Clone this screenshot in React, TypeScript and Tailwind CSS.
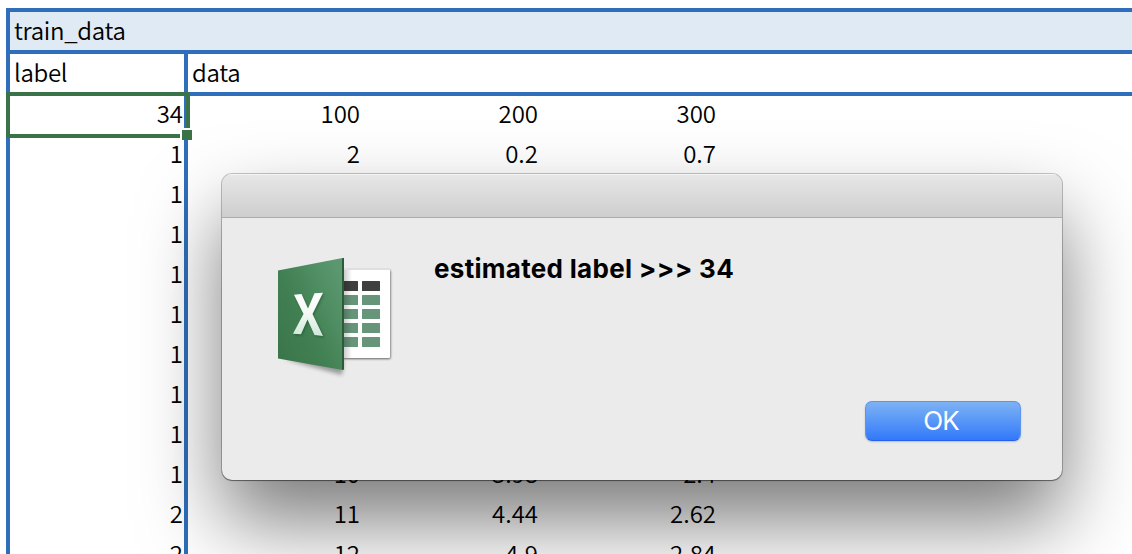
const rows: string[][] = [
  ['34', '100', '200', '300'],
  ['1', '2', '0.2', '0.7'],
  ['1', '', '', ''],
  ['1', '', '', ''],
  ['1', '', '', ''],
  ['1', '', '', ''],
  ['1', '', '', ''],
  ['1', '', '', ''],
  ['1', '', '', ''],
  ['1', '10', '3.98', '2.4'],
  ['2', '11', '4.44', '2.62'],
  ['2', '12', '4.9', '2.84'],
];

function ExcelIcon() {
  const cells = [281, 295, 309, 323, 337];
  return (
    <svg width="130" height="130" viewBox="270 250 130 130" className="block">
      <defs>
        <linearGradient id="door" x1="0" y1="1" x2="1" y2="0.2">
          <stop offset="0" stopColor="#3a7449" />
          <stop offset="0.45" stopColor="#418052" />
          <stop offset="1" stopColor="#5b9870" />
        </linearGradient>
        <linearGradient id="mark" x1="0" y1="0" x2="0" y2="1">
          <stop offset="0" stopColor="#ffffff" />
          <stop offset="0.5" stopColor="#f2f9f4" />
          <stop offset="1" stopColor="#cfe8d8" />
        </linearGradient>
        <linearGradient id="fold" x1="0" y1="0" x2="1" y2="0">
          <stop offset="0" stopColor="#000" stopOpacity="0.2" />
          <stop offset="1" stopColor="#000" stopOpacity="0" />
        </linearGradient>
        <filter id="soft" x="-20%" y="-50%" width="140%" height="220%">
          <feGaussianBlur stdDeviation="2" />
        </filter>
        <filter id="tight" x="-20%" y="-20%" width="140%" height="140%">
          <feGaussianBlur stdDeviation="0.8" />
        </filter>
      </defs>
      <path d="M284 359 L342 375 L344 360 Z" fill="#000" opacity="0.35" filter="url(#soft)" />
      <rect x="330" y="270" width="60.5" height="89" rx="1.5" fill="#000" opacity="0.6" filter="url(#tight)" />
      <rect x="330" y="269.5" width="60" height="88.5" rx="1" fill="#fff" />
      {cells.map((y, i) => (
        <g key={y} fill={i === 0 ? '#3f3f3f' : '#67957a'}>
          <rect x="336" y={y} width="22" height="10" rx="0.5" />
          <rect x="362" y={y} width="18" height="10" rx="0.5" />
        </g>
      ))}
      <rect x="344" y="270" width="8" height="88" fill="url(#fold)" />
      <path d="M278 270.5 L342.5 258 H343.5 V370 H342.5 L278 358.5 Z" fill="url(#door)" />
      <path d="M342 258.2 L344 258 V369.5 L342 370 Z" fill="#2b5c39" />
      <path
        d="M294 295 L301 294.3 L308 308 L314.5 293.3 L323 292.8 L312.5 314 L323.5 336 L314.8 335 L307.5 320 L301 334.3 L293 333.7 L303.5 314 Z"
        transform="translate(1 1.5)"
        fill="#1d4a2b"
        opacity="0.5"
        filter="url(#tight)"
      />
      <path
        d="M294 294.7 L301.5 294 L308 308.5 L314.5 293.3 L323 292.8 L312.5 314 L323 336 L314.5 335 L307.5 319.5 L301 334.3 L293 333.7 L303.5 314 Z"
        fill="url(#mark)"
      />
    </svg>
  );
}

function Sheet() {
  return (
    <div className="ml-[6px] flex w-[1126px] flex-col border-l-4 border-[#2f6eba] text-[24px] font-[350] leading-[36px] text-black">
      <div className="h-[46px] border-y-4 border-[#2f6eba] bg-[#dfeaf5] pl-1 tracking-[-0.3px]">train_data</div>
      <div className="flex h-[42px] border-b-4 border-[#2f6eba] tracking-[-0.3px]">
        <div className="w-[178px] border-r-4 border-[#2f6eba] pl-1">label</div>
        <div className="pl-1">data</div>
      </div>
      {rows.map((row, i) => (
        <div key={i} className="flex h-10 shrink-0 text-right leading-[33px]">
          <div className="w-[178px] border-r-4 border-[#2f6eba] pr-[1px]">{row[0]}</div>
          <div className="w-[176px] pr-[4px]">{row[1]}</div>
          <div className="w-[178px] pr-[4px]">{row[2]}</div>
          <div className="w-[178px] pr-[4px]">{row[3]}</div>
        </div>
      ))}
    </div>
  );
}

export default function App() {
  return (
    <main className="relative h-[554px] w-[1132px] overflow-hidden bg-white pt-2 font-['Noto_Sans_CJK_JP',sans-serif]">
      <Sheet />
      <div className="absolute left-[6px] top-[92px] h-[46px] w-[184px] border-4 border-[#3b7349]" />
      <div className="absolute left-[180px] top-[128px] size-3 border-l-2 border-t-2 border-white bg-[#3b7349]" />
      <section
        role="dialog"
        className="absolute left-[222px] top-[174px] flex h-[306px] w-[840px] flex-col overflow-hidden rounded-[10px] bg-[#ebebeb] font-['Inter',sans-serif] text-black shadow-[0_0_0_1px_rgba(0,0,0,0.22),0_1px_1px_rgba(0,0,0,0.35),0_41px_80px_rgba(0,0,0,0.52)]"
      >
        <header className="h-[44px] shrink-0 border-b border-[#adadad] bg-linear-to-b from-[#e7e7e7] to-[#cecece] shadow-[inset_0_1px_0_#f5f5f5]" />
        <div className="flex flex-1">
          <div className="ml-12 mt-8">
            <ExcelIcon />
          </div>
          <div className="flex flex-1 flex-col pl-[34px] pr-[41px]">
            <p className="mt-[35px] text-[26px] font-bold leading-8 tracking-[0.3px]">estimated label &gt;&gt;&gt; 34</p>
            <button className="mb-[39px] ml-auto mt-auto h-10 w-[156px] rounded-[7px] border border-[#5b95ec] border-b-[#2560e8] bg-linear-to-b from-[#7db2f3] to-[#3278fa] pr-[4px] text-[26px] leading-[38px] tracking-[-0.8px] text-white shadow-[0_1px_2px_rgba(0,0,0,0.2)]">
              OK
            </button>
          </div>
        </div>
      </section>
    </main>
  );
}
